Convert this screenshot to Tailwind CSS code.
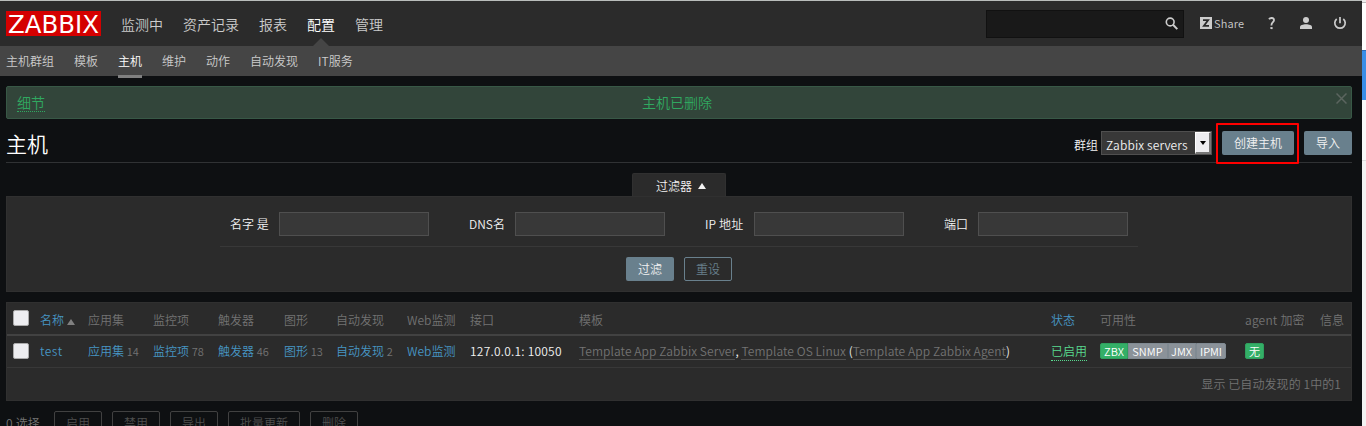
<!DOCTYPE html>
<html lang="zh-CN">
<head>
<meta charset="utf-8">
<title>Zabbix - 主机</title>
<script src="https://cdn.jsdelivr.net/npm/@tailwindcss/browser@4"></script>
</head>
<body class="flex h-[426px] w-[1366px] overflow-hidden bg-white font-['Noto_Sans_CJK_SC',sans-serif] text-[12px] leading-[16px] font-[350] text-[#f2f2f2]">
<div class="h-[426px] w-[1362px] shrink-0 overflow-hidden bg-[#0e1012]">
  <div class="h-px bg-[#b9bdbb]"></div>
  <header class="flex h-[45px] items-start bg-[#2b2b2b] pl-[6px]">
    <a class="mt-[10px] h-[25px] w-[95px] shrink-0 bg-[#d40000]">
      <svg class="block" width="95" height="25" viewBox="0 0 95 25"><text x="2" y="21.5" textLength="91" lengthAdjust="spacingAndGlyphs" font-family="DejaVu Sans" font-weight="400" font-size="25" fill="#fff">ZABBIX</text></svg>
    </a>
    <nav class="ml-5 flex h-full gap-5 pt-[13px] text-[14px] leading-5 text-[#ccc]">
      <a>监测中</a><a>资产记录</a><a>报表</a>
      <a class="relative text-white">配置<svg class="absolute top-[24px] left-[6px]" width="16" height="8"><path d="M0 8 8 0l8 8z" fill="#454545"/></svg></a>
      <a>管理</a>
    </nav>
    <div class="mr-[15px] ml-auto flex items-start">
      <div class="mt-[9px] flex h-[28px] w-[198px] justify-end border border-[#111] bg-[#191919] pt-[6px] pr-[5px]">
        <svg width="13" height="13" viewBox="0 0 13 13" fill="none" stroke="#ccc"><circle cx="5.200" cy="5" r="3.900" stroke-width="1.600"/><path d="m8 7.800 4.300 4.300" stroke-width="2"/></svg>
      </div>
      <a class="mt-4 ml-4 flex w-[45px] gap-[2px] text-[11px] leading-[14px] text-[#ccc]"><svg class="shrink-0" width="12" height="12"><path d="M0 0h12v12H0z" fill="#ccc"/><path d="M3 3.100h5.200L3.800 8.900h5.200" fill="none" stroke="#2b2b2b" stroke-width="1.700"/></svg><span class="-mt-px tracking-[0.15px]">Share</span></a>
      <svg class="mt-4 ml-[23px]" width="8" height="13" viewBox="0 0 8 13" fill="none" stroke="#ccc" stroke-width="1.800"><path d="M1 2.200C2 .6 6 .3 6 3.200c0 2-2.600 2.200-2.600 5.200"/><path d="M2.400 11.100h2.200" stroke-width="2"/></svg>
      <svg class="mt-4 ml-[24px]" width="12" height="12" fill="#ccc"><circle cx="6" cy="3" r="3"/><path d="M0 12v-2c0-1.800 3-2.800 6-2.800s6 1 6 2.800v2z"/></svg>
      <svg class="mt-4 ml-[21px]" width="14" height="13" fill="none" stroke="#ccc" stroke-width="1.700"><path d="M3.700 2a5.200 5.200 0 1 0 6.600 0M7 0v6.300"/></svg>
    </div>
  </header>
  <nav class="flex h-[30px] gap-5 bg-[#454545] pt-[7px] pl-[6px] text-[#ccc]">
    <a>主机群组</a><a>模板</a><a class="h-[25px] border-b-3 border-[#808080] text-white">主机</a><a>维护</a><a>动作</a><a>自动发现</a><a>IT服务</a>
  </nav>
  <main class="pr-[10px] pl-[6px]">
    <div class="mt-[10px] flex h-[33px] rounded-[2px] border border-[#385846] bg-[#32453a] px-[10px] text-[14px] leading-[20px] text-[#30a860]">
      <a class="mt-[5px] h-[20px] w-[28px] border-b border-dotted border-[#30a860]">细节</a>
      <span class="mt-[5px] flex-1 pr-[32px] text-center">主机已删除</span>
      <svg class="mt-[6px] -mr-[6px] -ml-[5px] shrink-0" width="11" height="11" stroke="#5b655f" stroke-width="1.500"><path d="m.5.5 10 10m0-10-10 10"/></svg>
    </div>
    <div class="flex h-[44px] items-start border-b border-[#303234]">
      <h1 class="mt-[10px] text-[21px] leading-[28px] text-white">主机</h1>
      <div class="relative mt-[12px] ml-auto flex h-6">
        <span class="mr-[3px] pt-[6px]">群组</span>
        <div class="mr-[10px] flex h-6 w-[111px] border border-[#4f4f4f] bg-[#383838] pl-1">
          <span class="w-[89px] shrink-0 pt-[5px] tracking-[0.12px] whitespace-nowrap">Zabbix servers</span>
          <span class="flex h-[22px] w-[16px] items-center justify-center border-t border-r-2 border-b-2 border-l border-t-white border-r-[#777] border-b-[#777] border-l-white bg-[#ededf0]"><svg width="6" height="4"><path d="M0 0h6L3 4z"/></svg></span>
        </div>
        <button class="mr-[10px] h-6 w-[72px] rounded-[2px] bg-[#69808d]">创建主机</button>
        <button class="h-6 w-12 rounded-[2px] bg-[#69808d]">导入</button>
        <span class="absolute -top-[8px] right-[53px] h-[41px] w-[83px] rounded-[1px] border-2 border-[#f00]"></span>
      </div>
    </div>
    <div class="mt-[10px] flex h-[23px] justify-center">
      <a class="flex w-[94px] items-center justify-start gap-[6px] rounded-t-[2px] border border-b-0 border-[#303030] bg-[#2b2b2b] pt-px pl-[23px]">过滤器<svg width="8" height="6" fill="#f2f2f2"><path d="m4 0 4 6H0z"/></svg></a>
    </div>
    <section class="h-[96px] border border-[#303030] bg-[#2b2b2b]">
      <div class="mx-auto flex h-[50px] w-[918px] gap-10 border-b border-[#383838] px-[10px] pt-[15px] leading-6">
        <label class="flex w-[199px] justify-between">名字 是<span class="h-6 w-[150px] border border-[#4f4f4f] bg-[#383838]"></span></label>
        <label class="flex w-[196px] justify-between">DNS名<span class="h-6 w-[150px] border border-[#4f4f4f] bg-[#383838]"></span></label>
        <label class="flex w-[199px] justify-between tracking-[0.15px]">IP 地址<span class="h-6 w-[150px] border border-[#4f4f4f] bg-[#383838]"></span></label>
        <label class="flex w-[184px] justify-between">端口<span class="h-6 w-[150px] border border-[#4f4f4f] bg-[#383838]"></span></label>
      </div>
      <div class="mt-[10px] flex justify-center gap-[10px]">
        <button class="h-6 w-12 rounded-[2px] bg-[#69808d]">过滤</button>
        <button class="h-6 w-12 rounded-[2px] border border-[#69808d] text-[#69808d]">重设</button>
      </div>
    </section>
    <section class="mt-[10px] h-[99px] border border-[#303030] bg-[#2b2b2b] whitespace-nowrap">
      <div class="grid h-[33px] grid-cols-[33px_48px_65px_65px_66px_52px_71px_63px_109px_472px_49px_145px_75px_1fr] border-b-2 border-[#424242] pt-[9px] text-[#737373]">
        <span class="-mt-[2px] ml-[6px] h-4 w-4 rounded-[2px] border border-[#aaa] bg-[#ededf0]"></span>
        <a class="flex items-start gap-[3px] text-[#4796c4]">名称<svg class="mt-[7px]" width="8" height="6" fill="#808080"><path d="m4 0 4 6H0z"/></svg></a>
        <span>应用集</span><span>监控项</span><span>触发器</span><span>图形</span><span>自动发现</span><span>Web监测</span><span>接口</span><span>模板</span><a class="text-[#4796c4]">状态</a><span>可用性</span><span class="tracking-[0.2px]">agent 加密</span><span>信息</span>
      </div>
      <div class="grid h-[32px] grid-cols-[33px_48px_65px_65px_66px_52px_71px_63px_109px_472px_49px_145px_75px_1fr] border-b border-[#383838] pt-[7px] text-[#4796c4]">
        <span class="ml-[6px] h-4 w-4 rounded-[2px] border border-[#aaa] bg-[#ededf0]"></span>
        <a class="tracking-[0.5px]">test</a>
        <span>应用集 <sup class="top-0 align-baseline text-[11px] text-[#737373]">14</sup></span>
        <span>监控项 <sup class="top-0 align-baseline text-[11px] text-[#737373]">78</sup></span>
        <span>触发器 <sup class="top-0 align-baseline text-[11px] text-[#737373]">46</sup></span>
        <span>图形 <sup class="top-0 align-baseline text-[11px] text-[#737373]">13</sup></span>
        <span>自动发现 <sup class="top-0 align-baseline text-[11px] text-[#737373]">2</sup></span>
        <span>Web监测</span>
        <span class="tracking-[0.23px] text-[#f2f2f2]">127.0.0.1: 10050</span>
        <span class="tracking-[0.07px] text-[#f2f2f2]"><a class="border-b border-[#4f4f4f] text-[#737373]">Template App Zabbix Server</a>, <a class="border-b border-[#4f4f4f] text-[#737373]">Template OS Linux</a> (<a class="border-b border-[#4f4f4f] text-[#737373]">Template App Zabbix Agent</a>)</span>
        <span class="h-[18px] w-9 border-b border-dotted border-[#59db8f] text-[#59db8f]">已启用</span>
        <span class="flex h-4 text-center text-[11px] text-white">
          <i class="w-7 rounded-l-[2px] border border-[#2f9f5e] bg-[#34af67] leading-[15px] not-italic">ZBX</i><i class="w-10 border border-[#808a92] bg-[#8b9299] pr-px leading-[15px] tracking-[0.1px] not-italic">SNMP</i><i class="w-[28px] border border-[#808a92] bg-[#8b9299] pr-px leading-[15px] not-italic">JMX</i><i class="w-[30px] rounded-r-[2px] border border-[#808a92] bg-[#8b9299] leading-[15px] not-italic">IPMI</i>
        </span>
        <span class="h-4 w-[19px] rounded-[2px] border border-[#2f9f5e] bg-[#34af67] text-center text-[11px] leading-[15px] text-white">无</span>
        <span></span>
      </div>
      <div class="pt-[8px] pr-[10px] text-right tracking-[0.08px] text-[#737373]">显示 已自动发现的 1中的1</div>
    </section>
    <footer class="mt-[10px] flex h-6 gap-[10px] leading-[22px] text-[#4f4f4f]">
      <span class="w-[38px] pt-px tracking-[0.2px] whitespace-nowrap text-[#737373]">0 选择</span>
      <button class="w-12 rounded-[2px] border border-[#414141]">启用</button>
      <button class="w-12 rounded-[2px] border border-[#414141]">禁用</button>
      <button class="w-12 rounded-[2px] border border-[#414141]">导出</button>
      <button class="w-[72px] rounded-[2px] border border-[#414141]">批量更新</button>
      <button class="w-12 rounded-[2px] border border-[#414141]">删除</button>
    </footer>
  </main>
</div>
<aside class="flex h-full w-1 flex-col">
  <div class="h-[2px] bg-[#eee]"></div>
  <div class="h-px bg-[#bbb]"></div>
  <div class="mt-[47px] h-[50px] border-t border-[#2b6cb5] bg-[#398ee7]"></div>
  <div class="h-[60px] bg-[#f8f8f8]"></div>
  <div class="h-px bg-[#ddd]"></div>
  <div class="flex-1 bg-[#f2f2f2]"></div>
</aside>
</body>
</html>
